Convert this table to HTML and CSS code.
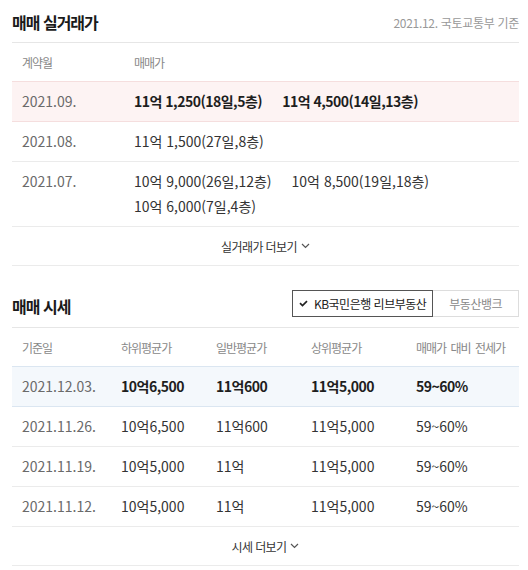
FILE: index.html
```html
<!DOCTYPE html>
<html lang="ko">
<head>
<meta charset="utf-8">
<title>매매 실거래가 / 매매 시세</title>
<link rel="stylesheet" href="styles.css">
</head>
<body>
<div class="wrap">
  <section class="sec">
    <div class="sec-head">
      <h2 class="title">매매 실거래가</h2>
      <span class="note">2021.12. 국토교통부 기준</span>
    </div>
    <div class="thead trade-grid to-red">
      <span>계약월</span><span>매매가</span>
    </div>
    <div class="trow trade-grid hl-red">
      <span class="date">2021.09.</span>
      <div class="vals"><span>11억 1,250(18일,5층)</span><span>11억 4,500(14일,13층)</span></div>
    </div>
    <div class="trow trade-grid">
      <span class="date">2021.08.</span>
      <div class="vals"><span>11억 1,500(27일,8층)</span></div>
    </div>
    <div class="trow trade-grid">
      <span class="date">2021.07.</span>
      <div class="vals"><span>10억 9,000(26일,12층)</span><span>10억 8,500(19일,18층)</span><span>10억 6,000(7일,4층)</span></div>
    </div>
    <div class="more">실거래가 더보기<svg class="chev" width="9" height="6" viewBox="0 0 9 6"><polyline points="1,1 4.5,4.5 8,1" fill="none" stroke="#555" stroke-width="1.2"/></svg></div>
  </section>

  <section class="sec">
    <div class="sec-head sec-head2">
      <h2 class="title">매매 시세</h2>
      <div class="btns">
        <button class="btn on"><svg class="check" width="9" height="7" viewBox="0 0 9 7"><polyline points="1,3.2 3.5,5.6 8,1.2" fill="none" stroke="#222" stroke-width="1.7"/></svg>KB국민은행 리브부동산</button>
        <button class="btn">부동산뱅크</button>
      </div>
    </div>
    <div class="thead price-grid to-blue">
      <span>기준일</span><span>하위평균가</span><span>일반평균가</span><span>상위평균가</span><span>매매가 대비 전세가</span>
    </div>
    <div class="trow price-grid hl-blue">
      <span class="date">2021.12.03.</span><span>10억6,500</span><span>11억600</span><span>11억5,000</span><span>59~60%</span>
    </div>
    <div class="trow price-grid">
      <span class="date">2021.11.26.</span><span>10억6,500</span><span>11억600</span><span>11억5,000</span><span>59~60%</span>
    </div>
    <div class="trow price-grid">
      <span class="date">2021.11.19.</span><span>10억5,000</span><span>11억</span><span>11억5,000</span><span>59~60%</span>
    </div>
    <div class="trow price-grid">
      <span class="date">2021.11.12.</span><span>10억5,000</span><span>11억</span><span>11억5,000</span><span>59~60%</span>
    </div>
    <div class="more">시세 더보기<svg class="chev" width="9" height="6" viewBox="0 0 9 6"><polyline points="1,1 4.5,4.5 8,1" fill="none" stroke="#555" stroke-width="1.2"/></svg></div>
  </section>
</div>
</body>
</html>
```

FILE: styles.css
```css
* { box-sizing: border-box; }
html, body { margin: 0; padding: 0; background: #fff; }
body {
  font-family: "Noto Sans CJK KR", "Noto Sans", sans-serif;
  color: #333;
}
.wrap { padding: 0 9px 0 12px; }

.sec-head {
  height: 43px;
  display: flex;
  align-items: center;
  justify-content: space-between;
  border-bottom: 1px solid #e6e6e6;
}
.title {
  margin: 0;
  padding-top: 2px;
  font-size: 16px;
  font-weight: 700;
  letter-spacing: -1px;
  line-height: 22px;
  color: #1a1a1a;
}
.sec-head2 .title { padding-top: 0; }
.note {
  font-size: 12px;
  color: #999;
  letter-spacing: -0.3px;
  padding-top: 2px;
}

.sec-head2 {
  height: 62px;
  align-items: flex-end;
  padding-bottom: 10px;
}

.thead {
  height: 39px;
  align-items: center;
  padding-left: 10px;
  font-size: 12px;
  color: #888;
  letter-spacing: -1px;
  word-spacing: 2px;
  border-bottom: 1px solid #ebebeb;
}
.thead.to-red { border-bottom-color: #f5dede; }
.thead.to-blue { border-bottom-color: #dbe6f1; }

.trade-grid { display: grid; grid-template-columns: 112px 1fr; }
.price-grid { display: grid; grid-template-columns: 99px 95px 95px 105px 1fr; }

.trow {
  padding: 7px 0 7px 10px;
  line-height: 25px;
  font-size: 14px;
  color: #333;
  border-bottom: 1px solid #ebebeb;
}
.trow .date { color: #6a6a6a; }
.vals { display: flex; flex-wrap: wrap; column-gap: 20px; }

.hl-red { background: #fdf3f3; border-bottom-color: #f5dede; }
.hl-blue { background: #f4f8fc; border-bottom-color: #dbe6f1; }
.hl-red .vals, .hl-blue span:not(.date) {
  font-weight: 700;
  color: #1e1e1e;
  letter-spacing: -0.5px;
}

.more {
  height: 39px;
  display: flex;
  justify-content: center;
  align-items: center;
  font-size: 12px;
  letter-spacing: -0.6px;
  color: #333;
  border-bottom: 1px solid #ebebeb;
}
.chev { margin-left: 4px; }

.btns { display: flex; }
.btn {
  height: 27px;
  display: flex;
  align-items: center;
  margin: 0;
  padding: 0 16px;
  border: 1px solid #ddd;
  background: #fff;
  font-family: inherit;
  font-size: 12px;
  letter-spacing: -0.5px;
  color: #888;
  cursor: pointer;
}
.btn + .btn { margin-left: -1px; }
.btn.on {
  position: relative;
  z-index: 1;
  border-color: #555;
  color: #222;
  padding: 0 6px;
}
.check { margin-right: 6px; }
```
